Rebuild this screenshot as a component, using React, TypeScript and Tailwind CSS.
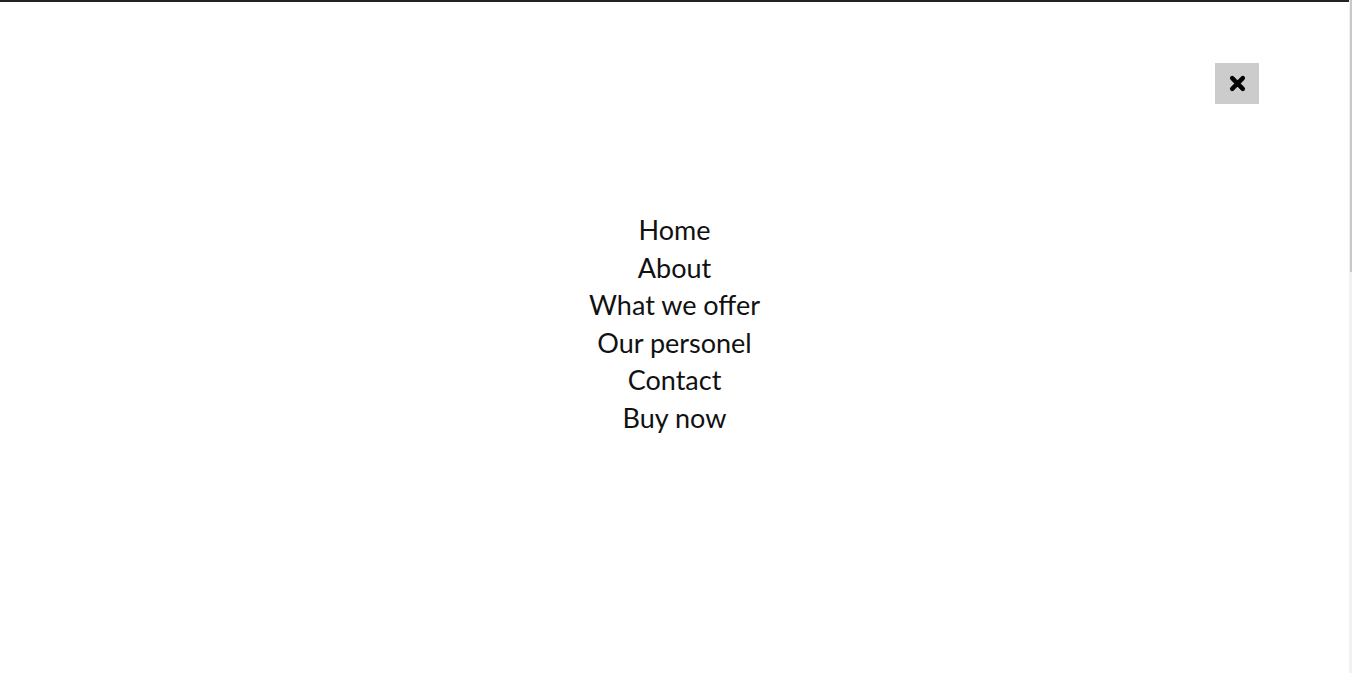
const links = ['Home', 'About', 'What we offer', 'Our personel', 'Contact', 'Buy now'];

function CloseIcon() {
  return (
    <svg viewBox="0 0 16 16" className="w-[17px] h-[17px]" aria-hidden="true">
      <path
        d="M3 3 L13 13 M13 3 L3 13"
        stroke="#000"
        strokeWidth="4.2"
        strokeLinecap="round"
        fill="none"
      />
    </svg>
  );
}

export default function App() {
  return (
    <div className="h-[673px] w-full flex bg-white overflow-hidden font-['Lato',sans-serif]">
      <div className="flex-1 flex flex-col border-t-2 border-[#222]">
        <div className="flex justify-end pt-[61px] pr-[90px]">
          <button className="w-[44px] h-[41px] bg-[#ccc] flex items-center justify-center">
            <CloseIcon />
          </button>
        </div>
        <nav className="flex flex-col items-center pt-[107px]">
          {links.map((l) => (
            <a key={l} href="#" className="text-[27px] leading-[37.6px] text-[#111]">
              {l}
            </a>
          ))}
        </nav>
      </div>
      <div className="w-[3px] flex flex-col bg-[#f1f1f1]">
        <div className="h-[272px] bg-[#c8c8c8] w-[2px] ml-[1px]" />
      </div>
    </div>
  );
}
